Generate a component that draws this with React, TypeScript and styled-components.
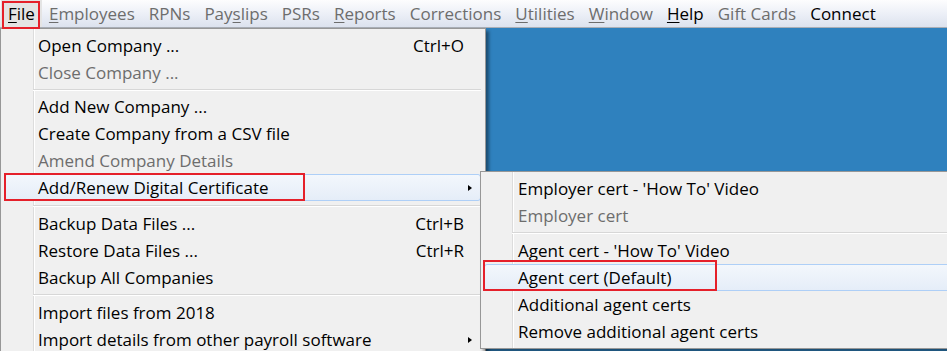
import React from "react";
import styled, { createGlobalStyle } from "styled-components";

const Global = createGlobalStyle`
  html, body { margin: 0; padding: 0; width: 947px; height: 351px; overflow: hidden; background: #f0f0f0; }
  body { font-family: "Open Sans", "Noto Sans", sans-serif; -webkit-font-smoothing: antialiased; }
  #root { width: 947px; height: 351px; }
`;

const RED = "#e5202a";

const AppWindow = styled.div`
  position: relative;
  width: 947px;
  height: 351px;
  overflow: hidden;
  display: flex;
  flex-direction: column;
`;

const MenuBar = styled.div`
  height: 27px;
  flex: none;
  border-bottom: 1px solid #a9aeb6;
  background: linear-gradient(#fdfdfe 0%, #eef1f8 45%, #dce2ee 100%);
  display: flex;
  align-items: stretch;
  padding-left: 1px;
  font-size: 17px;
`;

const BarItem = styled.div<{ $disabled?: boolean; $open?: boolean }>`
  position: relative;
  padding: 0 7px;
  display: flex;
  align-items: center;
  white-space: nowrap;
  color: ${(p) => (p.$disabled ? "#6d6d6d" : "#000")};
  background: ${(p) => (p.$open ? "#e4e4e4" : "transparent")};
`;

const Key = styled.span`
  text-decoration: underline;
  text-decoration-thickness: 1px;
  text-underline-offset: 2px;
`;

const Workspace = styled.div`
  flex: 1;
  background: #2f81be;
`;

const Mark = styled.div<{ $l: number; $t: number; $w: number; $h: number }>`
  position: absolute;
  left: ${(p) => p.$l}px;
  top: ${(p) => p.$t}px;
  width: ${(p) => p.$w}px;
  height: ${(p) => p.$h}px;
  box-sizing: border-box;
  border: 2px solid ${RED};
  pointer-events: none;
  z-index: 5;
`;

const MenuPanel = styled.div<{ $left: number; $top: number; $width: number; $gutter: number }>`
  position: absolute;
  left: ${(p) => p.$left}px;
  top: ${(p) => p.$top}px;
  width: ${(p) => p.$width}px;
  box-sizing: border-box;
  border: 1px solid #979797;
  padding: 3px 4px 3px 3px;
  background-color: #f0f0f0;
  background-image: linear-gradient(
    to right,
    transparent ${(p) => p.$gutter}px,
    #dcdcdc ${(p) => p.$gutter}px,
    #dcdcdc ${(p) => p.$gutter + 1}px,
    #ffffff ${(p) => p.$gutter + 1}px,
    #ffffff ${(p) => p.$gutter + 2}px,
    transparent ${(p) => p.$gutter + 2}px
  );
  box-shadow: 3px 3px 3px rgba(0, 0, 0, 0.4);
  font-size: 17px;
  z-index: 2;
`;

const Item = styled.div<{ $disabled?: boolean; $active?: boolean; $pad: number }>`
  position: relative;
  height: 27px;
  box-sizing: border-box;
  display: grid;
  grid-template-columns: 1fr auto 17px;
  align-items: center;
  padding-left: ${(p) => p.$pad}px;
  white-space: nowrap;
  color: ${(p) => (p.$disabled ? "#6d6d6d" : "#000")};
  border: 1px solid ${(p) => (p.$active ? "#aecff7" : "transparent")};
  border-radius: 3px;
  background: ${(p) => (p.$active ? "linear-gradient(#f3f7fc, #e5edf8)" : "transparent")};
  margin: 0;
`;

const Label = styled.span`
  margin-left: -1px;
`;

const Shortcut = styled.span`
  text-align: right;
  margin-right: -1px;
`;

const Arrow = styled.span`
  justify-self: start;
  margin-left: 5px;
  width: 0;
  height: 0;
  border-left: 4px solid #000;
  border-top: 3.5px solid transparent;
  border-bottom: 3.5px solid transparent;
`;

const Separator = styled.div<{ $h: number; $indent: number }>`
  height: ${(p) => p.$h}px;
  display: flex;
  align-items: center;
  padding-left: ${(p) => p.$indent}px;
  &::after {
    content: "";
    flex: 1;
    height: 0;
    border-top: 1px solid #d7d7d7;
    border-bottom: 1px solid #ffffff;
  }
`;

type Entry =
  | { sep: number }
  | {
      label: React.ReactNode;
      shortcut?: string;
      disabled?: boolean;
      active?: boolean;
      submenu?: boolean;
      mark?: { l: number; t: number; w: number; h: number };
    };

const mainItems: Entry[] = [
  { label: "Open Company ...", shortcut: "Ctrl+O" },
  { label: "Close Company ...", disabled: true },
  { sep: 7 },
  { label: "Add New Company ..." },
  { label: "Create Company from a CSV file" },
  { label: "Amend Company Details", disabled: true },
  {
    label: "Add/Renew Digital Certificate",
    submenu: true,
    active: true,
    mark: { l: -1, t: -2, w: 301, h: 28 },
  },
  { sep: 9 },
  { label: "Backup Data Files ...", shortcut: "Ctrl+B" },
  { label: "Restore Data Files ...", shortcut: "Ctrl+R" },
  { label: "Backup All Companies" },
  { sep: 8 },
  { label: "Import files from 2018" },
  { label: "Import details from other payroll software", submenu: true },
];

const subItems: Entry[] = [
  { label: "Employer cert - 'How To' Video" },
  { label: "Employer cert", disabled: true },
  { sep: 8 },
  { label: "Agent cert - 'How To' Video" },
  {
    label: "Agent cert (Default)",
    active: true,
    mark: { l: -2, t: -5, w: 234, h: 31 },
  },
  { label: "Additional agent certs" },
  { label: "Remove additional agent certs" },
];

function Menu({
  entries,
  left,
  top,
  width,
  gutter,
  pad,
}: {
  entries: Entry[];
  left: number;
  top: number;
  width: number;
  gutter: number;
  pad: number;
}) {
  return (
    <MenuPanel $left={left} $top={top} $width={width} $gutter={gutter}>
      {entries.map((e, i) =>
        "sep" in e ? (
          <Separator key={i} $h={e.sep} $indent={gutter - 3} />
        ) : (
          <Item key={i} $disabled={e.disabled} $active={e.active} $pad={pad}>
            <Label>{e.label}</Label>
            <Shortcut>{e.shortcut ?? ""}</Shortcut>
            {e.submenu ? <Arrow /> : <span />}
            {e.mark && <Mark $l={e.mark.l} $t={e.mark.t} $w={e.mark.w} $h={e.mark.h} />}
          </Item>
        )
      )}
    </MenuPanel>
  );
}

export default function App() {
  return (
    <>
      <Global />
      <AppWindow>
        <MenuBar>
          <BarItem $open>
            <span>
              <Key>F</Key>ile
            </span>
            <Mark $l={1} $t={1} $w={38} $h={28} />
          </BarItem>
          <BarItem $disabled>
            <span>
              <Key>E</Key>mployees
            </span>
          </BarItem>
          <BarItem $disabled>RPNs</BarItem>
          <BarItem $disabled>
            <span>
              Pay<Key>s</Key>lips
            </span>
          </BarItem>
          <BarItem $disabled>PSRs</BarItem>
          <BarItem $disabled>
            <span>
              <Key>R</Key>eports
            </span>
          </BarItem>
          <BarItem $disabled>Corrections</BarItem>
          <BarItem $disabled>
            <span>
              <Key>U</Key>tilities
            </span>
          </BarItem>
          <BarItem $disabled>
            <span>
              <Key>W</Key>indow
            </span>
          </BarItem>
          <BarItem>
            <span>
              <Key>H</Key>elp
            </span>
          </BarItem>
          <BarItem $disabled>Gift Cards</BarItem>
          <BarItem>Connect</BarItem>
        </MenuBar>
        <Workspace />
        <Menu entries={mainItems} left={0} top={28} width={486} gutter={32} pad={34} />
        <Menu entries={subItems} left={480} top={171} width={520} gutter={31} pad={34} />
      </AppWindow>
    </>
  );
}
